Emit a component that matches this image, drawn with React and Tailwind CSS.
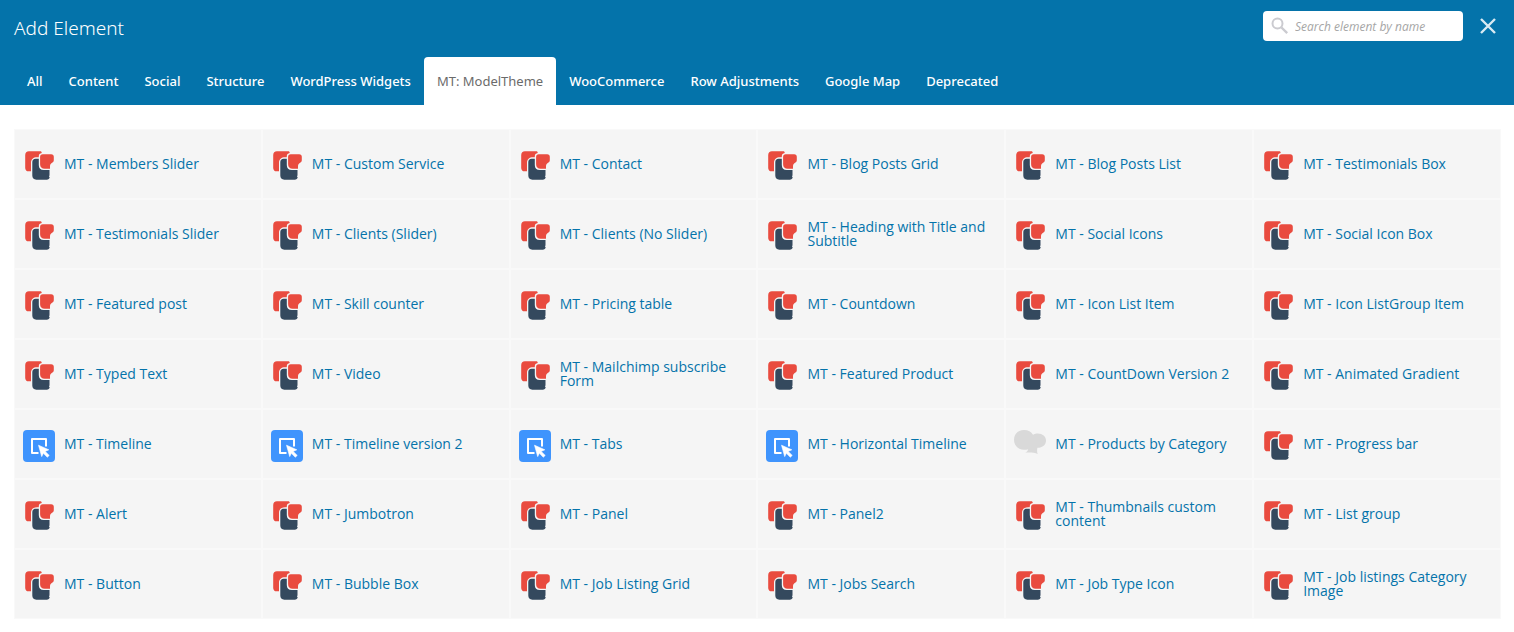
import React, { useState } from "react";

const TABS = [
  "All",
  "Content",
  "Social",
  "Structure",
  "WordPress Widgets",
  "MT: ModelTheme",
  "WooCommerce",
  "Row Adjustments",
  "Google Map",
  "Deprecated",
];

const ELEMENTS = [
  ["Members Slider"],
  ["Custom Service"],
  ["Contact"],
  ["Blog Posts Grid"],
  ["Blog Posts List"],
  ["Testimonials Box"],
  ["Testimonials Slider"],
  ["Clients (Slider)"],
  ["Clients (No Slider)"],
  ["Heading with Title and Subtitle"],
  ["Social Icons"],
  ["Social Icon Box"],
  ["Featured post"],
  ["Skill counter"],
  ["Pricing table"],
  ["Countdown"],
  ["Icon List Item"],
  ["Icon ListGroup Item"],
  ["Typed Text"],
  ["Video"],
  ["Mailchimp subscribe Form"],
  ["Featured Product"],
  ["CountDown Version 2"],
  ["Animated Gradient"],
  ["Timeline", "pointer"],
  ["Timeline version 2", "pointer"],
  ["Tabs", "pointer"],
  ["Horizontal Timeline", "pointer"],
  ["Products by Category", "cloud"],
  ["Progress bar"],
  ["Alert"],
  ["Jumbotron"],
  ["Panel"],
  ["Panel2"],
  ["Thumbnails custom content"],
  ["List group"],
  ["Button"],
  ["Bubble Box"],
  ["Job Listing Grid"],
  ["Jobs Search"],
  ["Job Type Icon"],
  ["Job listings Category Image"],
];

function ThemeIcon() {
  return (
    <svg viewBox="0 0 32 32" className="h-8 w-8" aria-hidden="true">
      <path
        fill="#e94b3f"
        d="M6 1.300h11.200c1 0 1.600.7 1.500 1.600-1.800.3-2.900 1.500-2.900 3.400v.9h-1.600c-3.900 0-6.200 2-6.200 5.600v8.500H5.600c-2 0-3.400-1.400-3.400-3.400V5.300c0-2.400 1.400-4 3.800-4z"
      />
      <path
        fill="#34495e"
        d="M12.600 8.800h3.200v6.200c0 3.300 1.700 5 5 5h5.700v5.500c-.7.500-.6 1.200.2 1.700-.3 1.500-1.200 2.500-3 2.500H13.400c-2.700 0-4.100-1.400-4.100-4.100V12.300c0-2.200 1.200-3.500 3.300-3.500z"
      />
      <path
        fill="#e94b3f"
        d="M19.800 4.200h8.400c1.700 0 2.600.9 2.600 2.600v3.400c0 1.300-.6 1.900-1.700 2.500-1.500.9-2.100 2-2.100 3.700v2.400h-5.300c-2.900 0-4.600-1.600-4.600-4.500V6.900c0-1.700.9-2.700 2.700-2.700z"
      />
    </svg>
  );
}

function PointerIcon() {
  return (
    <svg viewBox="0 0 32 32" className="h-8 w-8" aria-hidden="true">
      <rect width="32" height="32" rx="4" fill="#3f94fd" />
      <path d="M15.500 23H9V9h14v7.500" fill="none" stroke="#fff" strokeWidth="2" strokeLinejoin="round" />
      <path
        fill="#fff"
        d="M15.500 15.200l10.300 4.600-3.600 1.600 4 4-1.900 1.800-3.900-3.900-1.700 3.300z"
        stroke="#fff"
        strokeWidth=".6"
        strokeLinejoin="round"
      />
    </svg>
  );
}

function CloudIcon() {
  return (
    <svg viewBox="0 0 32 32" className="h-8 w-8" aria-hidden="true">
      <path
        fill="#d9d9d9"
        d="M10 0c4.200 0 7.400 1.900 9 4.700 1.500-.9 3-1.300 4.800-1.300 4.700 0 8.200 2.900 8.200 7 0 4.300-3.400 7.200-8.500 7.400-.6 1.900-.6 3.700.2 6.100-3.300-1.500-7.600-1.600-12.500-1.300 1.700-.9 2.600-2 3-3.400-1.200.4-2.600.6-4.200.6C4.200 19.800 0 15.500 0 9.800 0 4 4.200 0 10 0z"
      />
    </svg>
  );
}

const ICONS = { theme: ThemeIcon, pointer: PointerIcon, cloud: CloudIcon };

function ElementButton({ name, icon = "theme" }) {
  const Icon = ICONS[icon];
  return (
    <button
      type="button"
      className="flex min-h-17 w-full items-center gap-[9px] bg-[#f5f5f5] px-2 text-left font-['Open_Sans','Noto_Sans',sans-serif] text-sm leading-3.5 font-medium text-[#0473aa]"
    >
      <span className="mt-1 shrink-0">
        <Icon />
      </span>
      <span>MT - {name}</span>
    </button>
  );
}

export default function App() {
  const [active, setActive] = useState("MT: ModelTheme");
  return (
    <div className="min-h-screen bg-white font-['Noto_Sans','Open_Sans',sans-serif]">
      <header className="bg-[#0473aa] pr-4 pl-3.5">
        <div className="flex h-[57px] items-center justify-between">
          <h1 className="text-[19px] font-light text-white">Add Element</h1>
          <div className="flex items-center gap-[15px] pb-[5px]">
            <label className="flex h-[30px] w-50 items-center gap-1.5 rounded bg-white px-2">
              <svg viewBox="0 0 18 18" className="h-[18px] w-[18px] shrink-0" fill="none" stroke="#cbcbd0" aria-hidden="true">
                <circle cx="6.500" cy="6.500" r="5" strokeWidth="2" />
                <path d="M10.500 10.500l5.700 5.700" strokeWidth="2.400" />
              </svg>
              <input
                type="text"
                aria-label="Search element by name"
                placeholder="Search element by name"
                className="w-full min-w-0 bg-transparent pt-0.5 font-['Open_Sans','Noto_Sans',sans-serif] text-xs italic outline-none placeholder:text-[#a6a6a6]"
              />
            </label>
            <button type="button" aria-label="Close" className="p-0.5">
              <svg viewBox="0 0 16 16" className="h-4 w-4" fill="none" stroke="#d9eaf3" strokeWidth="2.400" aria-hidden="true">
                <path d="M1 1l14 14M15 1L1 15" />
              </svg>
            </button>
          </div>
        </div>
        <nav className="flex">
          {TABS.map((tab) => (
            <button
              key={tab}
              type="button"
              onClick={() => setActive(tab)}
              className={
                tab === active
                  ? "h-12 rounded-t bg-white px-[13px] pt-0.5 text-[13px] whitespace-nowrap text-[#6b6b6b]"
                  : "h-12 px-[13px] pt-0.5 text-[13px] font-medium whitespace-nowrap text-white"
              }
            >
              {tab}
            </button>
          ))}
        </nav>
      </header>
      <main className="pt-6 pr-[13px] pb-3 pl-3.5">
        <div className="grid grid-cols-6 gap-0.5 bg-[#f9f9f9] p-px">
          {ELEMENTS.map(([name, icon]) => (
            <ElementButton key={name} name={name} icon={icon} />
          ))}
        </div>
      </main>
    </div>
  );
}
